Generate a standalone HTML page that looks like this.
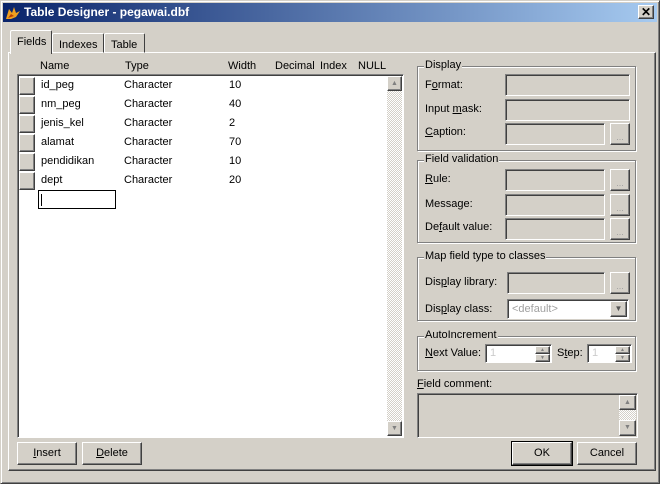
<!DOCTYPE html>
<html><head><style>
*{box-sizing:border-box;margin:0;padding:0}
body{width:660px;height:484px;background:#d4d0c8;font-family:"Liberation Sans",sans-serif;font-size:11px;color:#000;position:relative;overflow:hidden}
.a{position:absolute}
.out{border:1px solid;border-color:#fff #404040 #404040 #fff;box-shadow:inset -1px -1px #808080}
.in{border:1px solid;border-color:#808080 #fff #fff #808080;box-shadow:inset 1px 1px #404040}
.grp{position:absolute;border:1px solid #808080;box-shadow:1px 1px #fff, inset 1px 1px #fff}
.grp span{position:absolute;top:-8px;left:6px;background:#d4d0c8;padding:0 1px}
.btn{position:absolute;background:#d4d0c8;text-align:center;line-height:21px}
.dots{color:#a0a0a0;font-size:9px;line-height:18px;text-align:center}
.hatch{background:repeating-conic-gradient(#fff 0 25%,#d4d0c8 0 50%) 0 0/2px 2px}
u{text-decoration:underline}
</style></head><body>
<div class="a" style="left:0;top:0;width:660px;height:484px;border:1px solid;border-color:#d4d0c8 #404040 #404040 #d4d0c8;box-shadow:inset 1px 1px #fff,inset -1px -1px #808080"></div>
<div class="a" style="left:3px;top:3px;width:654px;height:19px;background:linear-gradient(90deg,#0a246a,#a6caf0)"></div>
<svg class="a" style="left:5px;top:5px" width="16" height="16"><path d="M1 14 L4 4 L7 8 L9 2 L11 8 L15 6 L11 12 L6 14Z" fill="#f0a020"/><path d="M3 13 L6 9 L9 11Z" fill="#c04000"/></svg>
<div class="a" style="left:24px;top:5px;color:#fff;font-weight:bold;font-size:12px">Table Designer - pegawai.dbf</div>
<div class="btn out" style="left:638px;top:5px;width:16px;height:14px;line-height:12px;font-weight:bold;font-size:12px">✕</div>
<!-- tabs -->
<div class="a" style="left:8px;top:52px;width:648px;height:419px;border:1px solid;border-color:#fff #404040 #404040 #fff;box-shadow:inset -1px -1px #808080"></div>
<div class="a" style="left:52px;top:33px;width:52px;height:20px;border:1px solid;border-color:#fff #404040 transparent #fff;border-radius:2px 2px 0 0;padding:5px 0 0 6px">Indexes</div>
<div class="a" style="left:104px;top:33px;width:41px;height:20px;border:1px solid;border-color:#fff #404040 transparent #fff;border-radius:2px 2px 0 0;padding:5px 0 0 6px">Table</div>
<div class="a" style="left:10px;top:30px;width:42px;height:24px;background:#d4d0c8;border:1px solid;border-color:#fff #404040 transparent #fff;border-bottom:none;border-radius:2px 2px 0 0;padding:5px 0 0 6px">Fields</div>
<!-- headers -->
<div class="a" style="left:40px;top:60px">Name</div>
<div class="a" style="left:125px;top:60px">Type</div>
<div class="a" style="left:228px;top:60px">Width</div>
<div class="a" style="left:275px;top:60px">Decimal</div>
<div class="a" style="left:320px;top:60px">Index</div>
<div class="a" style="left:358px;top:60px">NULL</div>
<div class="a in" style="left:17px;top:74px;width:387px;height:364px;background:#fff"></div>
<div class="a hatch" style="left:387px;top:76px;width:15px;height:360px"></div>
<div class="btn out" style="left:387px;top:76px;width:15px;height:15px;line-height:13px;font-size:7px;color:#808080">▲</div>
<div class="btn out" style="left:387px;top:421px;width:15px;height:15px;line-height:13px;font-size:7px;color:#808080">▼</div>
<div class="a" style="left:19px;top:76px;width:368px">
<div style="position:relative;height:19px"><div class="out a" style="left:0;top:1px;width:16px;height:18px;background:#d4d0c8"></div><span class="a" style="left:22px;top:3px">id_peg</span><span class="a" style="left:105px;top:3px">Character</span><span class="a" style="left:210px;top:3px">10</span></div>
<div style="position:relative;height:19px"><div class="out a" style="left:0;top:1px;width:16px;height:18px;background:#d4d0c8"></div><span class="a" style="left:22px;top:3px">nm_peg</span><span class="a" style="left:105px;top:3px">Character</span><span class="a" style="left:210px;top:3px">40</span></div>
<div style="position:relative;height:19px"><div class="out a" style="left:0;top:1px;width:16px;height:18px;background:#d4d0c8"></div><span class="a" style="left:22px;top:3px">jenis_kel</span><span class="a" style="left:105px;top:3px">Character</span><span class="a" style="left:210px;top:3px">2</span></div>
<div style="position:relative;height:19px"><div class="out a" style="left:0;top:1px;width:16px;height:18px;background:#d4d0c8"></div><span class="a" style="left:22px;top:3px">alamat</span><span class="a" style="left:105px;top:3px">Character</span><span class="a" style="left:210px;top:3px">70</span></div>
<div style="position:relative;height:19px"><div class="out a" style="left:0;top:1px;width:16px;height:18px;background:#d4d0c8"></div><span class="a" style="left:22px;top:3px">pendidikan</span><span class="a" style="left:105px;top:3px">Character</span><span class="a" style="left:210px;top:3px">10</span></div>
<div style="position:relative;height:19px"><div class="out a" style="left:0;top:1px;width:16px;height:18px;background:#d4d0c8"></div><span class="a" style="left:22px;top:3px">dept</span><span class="a" style="left:105px;top:3px">Character</span><span class="a" style="left:210px;top:3px">20</span></div>
</div>
<div class="a" style="left:38px;top:190px;width:78px;height:19px;border:1px solid #000"><div class="a" style="left:2px;top:3px;width:1px;height:12px;background:#000"></div></div>
<div class="btn out" style="left:17px;top:442px;width:60px;height:23px"><u>I</u>nsert</div>
<div class="btn out" style="left:82px;top:442px;width:60px;height:23px"><u>D</u>elete</div>
<!-- right -->
<div class="grp" style="left:417px;top:66px;width:219px;height:85px"><span>Display</span></div>
<div class="a" style="left:425px;top:79px">F<u>o</u>rmat:</div>
<div class="a in" style="left:505px;top:74px;width:125px;height:22px"></div>
<div class="a" style="left:425px;top:103px">Input <u>m</u>ask:</div>
<div class="a in" style="left:505px;top:99px;width:125px;height:22px"></div>
<div class="a" style="left:425px;top:126px"><u>C</u>aption:</div>
<div class="a in" style="left:505px;top:123px;width:100px;height:22px"></div>
<div class="btn out dots" style="left:610px;top:123px;width:20px;height:22px;line-height:26px">...</div>
<div class="grp" style="left:417px;top:160px;width:219px;height:83px"><span>Field validation</span></div>
<div class="a" style="left:425px;top:173px"><u>R</u>ule:</div>
<div class="a in" style="left:505px;top:169px;width:100px;height:22px"></div>
<div class="btn out dots" style="left:610px;top:169px;width:20px;height:22px;line-height:26px">...</div>
<div class="a" style="left:425px;top:198px">Message:</div>
<div class="a in" style="left:505px;top:194px;width:100px;height:22px"></div>
<div class="btn out dots" style="left:610px;top:194px;width:20px;height:22px;line-height:26px">...</div>
<div class="a" style="left:425px;top:221px">De<u>f</u>ault value:</div>
<div class="a in" style="left:505px;top:218px;width:100px;height:22px"></div>
<div class="btn out dots" style="left:610px;top:218px;width:20px;height:22px;line-height:26px">...</div>
<div class="grp" style="left:417px;top:257px;width:219px;height:64px"><span>Map field type to classes</span></div>
<div class="a" style="left:425px;top:276px">Dis<u>p</u>lay library:</div>
<div class="a in" style="left:507px;top:272px;width:98px;height:22px"></div>
<div class="btn out dots" style="left:610px;top:272px;width:20px;height:22px;line-height:26px">...</div>
<div class="a" style="left:425px;top:303px">Dis<u>p</u>lay class:</div>
<div class="a in" style="left:507px;top:299px;width:122px;height:20px;background:#fff;color:#a0a0a0;padding:3px 4px">&lt;default&gt;</div>
<div class="btn out" style="left:610px;top:301px;width:17px;height:16px;line-height:14px;font-size:8px;color:#555">▼</div>
<div class="grp" style="left:417px;top:336px;width:219px;height:35px"><span>AutoIncrement</span></div>
<div class="a" style="left:425px;top:347px"><u>N</u>ext Value:</div>
<div class="a in" style="left:485px;top:344px;width:67px;height:19px;background:#fff;color:#ccc;padding:2px 4px">1</div>
<div class="btn out" style="left:535px;top:346px;width:15px;height:8px;font-size:5px;line-height:6px;color:#808080">▲</div>
<div class="btn out" style="left:535px;top:354px;width:15px;height:8px;font-size:5px;line-height:6px;color:#808080">▼</div>
<div class="a" style="left:557px;top:347px">S<u>t</u>ep:</div>
<div class="a in" style="left:587px;top:344px;width:45px;height:19px;background:#fff;color:#ccc;padding:2px 4px">1</div>
<div class="btn out" style="left:615px;top:346px;width:15px;height:8px;font-size:5px;line-height:6px;color:#808080">▲</div>
<div class="btn out" style="left:615px;top:354px;width:15px;height:8px;font-size:5px;line-height:6px;color:#808080">▼</div>
<div class="a" style="left:417px;top:378px"><u>F</u>ield comment:</div>
<div class="a in" style="left:417px;top:393px;width:221px;height:45px"></div>
<div class="a hatch" style="left:619px;top:395px;width:17px;height:41px"></div>
<div class="btn out" style="left:619px;top:395px;width:17px;height:15px;line-height:13px;font-size:7px;color:#808080">▲</div>
<div class="btn out" style="left:619px;top:420px;width:17px;height:16px;line-height:14px;font-size:7px;color:#808080">▼</div>
<div class="btn out" style="left:512px;top:442px;width:60px;height:23px;outline:1px solid #000">OK</div>
<div class="btn out" style="left:577px;top:442px;width:60px;height:23px">Cancel</div>
</body></html>
